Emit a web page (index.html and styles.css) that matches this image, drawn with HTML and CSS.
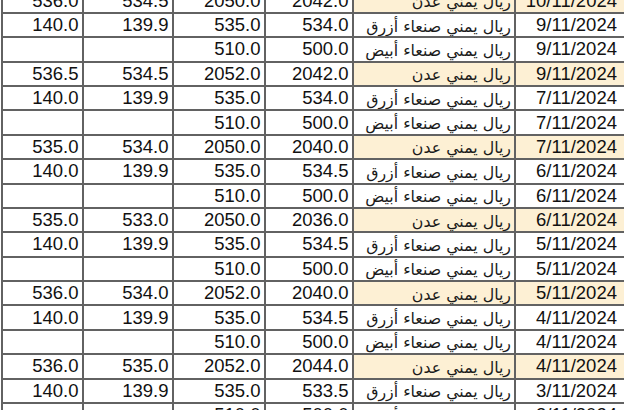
FILE: index.html
```html
<!DOCTYPE html>
<html lang="ar">
<head>
<meta charset="utf-8">
<title>أسعار الصرف</title>
<link rel="stylesheet" href="styles.css">
</head>
<body>
<div class="sheet" dir="ltr">
  <div class="row aden"><span class="num">536.0</span><span class="num">534.5</span><span class="num">2050.0</span><span class="num">2042.0</span><span class="name">ريال يمني عدن</span><span class="date">10/11/2024</span></div>
  <div class="row"><span class="num">140.0</span><span class="num">139.9</span><span class="num">535.0</span><span class="num">534.0</span><span class="name">ريال يمني صنعاء أزرق</span><span class="date">9/11/2024</span></div>
  <div class="row"><span class="num"></span><span class="num"></span><span class="num">510.0</span><span class="num">500.0</span><span class="name">ريال يمني صنعاء أبيض</span><span class="date">9/11/2024</span></div>
  <div class="row aden"><span class="num">536.5</span><span class="num">534.5</span><span class="num">2052.0</span><span class="num">2042.0</span><span class="name">ريال يمني عدن</span><span class="date">9/11/2024</span></div>
  <div class="row"><span class="num">140.0</span><span class="num">139.9</span><span class="num">535.0</span><span class="num">534.0</span><span class="name">ريال يمني صنعاء أزرق</span><span class="date">7/11/2024</span></div>
  <div class="row"><span class="num"></span><span class="num"></span><span class="num">510.0</span><span class="num">500.0</span><span class="name">ريال يمني صنعاء أبيض</span><span class="date">7/11/2024</span></div>
  <div class="row aden"><span class="num">535.0</span><span class="num">534.0</span><span class="num">2050.0</span><span class="num">2040.0</span><span class="name">ريال يمني عدن</span><span class="date">7/11/2024</span></div>
  <div class="row"><span class="num">140.0</span><span class="num">139.9</span><span class="num">535.0</span><span class="num">534.5</span><span class="name">ريال يمني صنعاء أزرق</span><span class="date">6/11/2024</span></div>
  <div class="row"><span class="num"></span><span class="num"></span><span class="num">510.0</span><span class="num">500.0</span><span class="name">ريال يمني صنعاء أبيض</span><span class="date">6/11/2024</span></div>
  <div class="row aden"><span class="num">535.0</span><span class="num">533.0</span><span class="num">2050.0</span><span class="num">2036.0</span><span class="name">ريال يمني عدن</span><span class="date">6/11/2024</span></div>
  <div class="row"><span class="num">140.0</span><span class="num">139.9</span><span class="num">535.0</span><span class="num">534.5</span><span class="name">ريال يمني صنعاء أزرق</span><span class="date">5/11/2024</span></div>
  <div class="row"><span class="num"></span><span class="num"></span><span class="num">510.0</span><span class="num">500.0</span><span class="name">ريال يمني صنعاء أبيض</span><span class="date">5/11/2024</span></div>
  <div class="row aden"><span class="num">536.0</span><span class="num">534.0</span><span class="num">2052.0</span><span class="num">2040.0</span><span class="name">ريال يمني عدن</span><span class="date">5/11/2024</span></div>
  <div class="row"><span class="num">140.0</span><span class="num">139.9</span><span class="num">535.0</span><span class="num">534.5</span><span class="name">ريال يمني صنعاء أزرق</span><span class="date">4/11/2024</span></div>
  <div class="row"><span class="num"></span><span class="num"></span><span class="num">510.0</span><span class="num">500.0</span><span class="name">ريال يمني صنعاء أبيض</span><span class="date">4/11/2024</span></div>
  <div class="row aden"><span class="num">536.0</span><span class="num">535.0</span><span class="num">2052.0</span><span class="num">2044.0</span><span class="name">ريال يمني عدن</span><span class="date">4/11/2024</span></div>
  <div class="row"><span class="num">140.0</span><span class="num">139.9</span><span class="num">535.0</span><span class="num">533.5</span><span class="name">ريال يمني صنعاء أزرق</span><span class="date">3/11/2024</span></div>
  <div class="row"><span class="num"></span><span class="num"></span><span class="num">510.0</span><span class="num">500.0</span><span class="name">ريال يمني صنعاء أبيض</span><span class="date">3/11/2024</span></div>
</div>
</body>
</html>
```
FILE: styles.css
```css
html, body {
  margin: 0;
  padding: 0;
  background: #ffffff;
  overflow: hidden;
}

body {
  width: 624px;
  height: 410px;
}

.sheet {
  display: grid;
  grid-template-columns: 79px 88px 90px 86px 160px 110px;
  grid-auto-rows: 22.375px;
  gap: 2px;
  padding: 2px;
  background: #626262;
  width: max-content;
  margin: -12.5px 0 0 1px;
  font-family: "Liberation Sans", Arial, sans-serif;
  font-size: 18.5px;
  color: #111111;
}

.row {
  display: contents;
}

.row > span {
  background: #ffffff;
  display: flex;
  align-items: center;
  justify-content: flex-end;
  white-space: nowrap;
  overflow: hidden;
}

.num {
  padding-right: 3.5px;
}

.name {
  direction: rtl;
  justify-content: flex-start !important;
  padding-right: 3px;
  padding-top: 2px;
  font-family: "DejaVu Sans", "Noto Sans", sans-serif;
  font-size: 15.8px;
  color: #1a1a1a;
}

.date {
  padding-right: 9px;
}

.row.aden .name,
.row.aden .date {
  background: #fdf0d4;
}
```
